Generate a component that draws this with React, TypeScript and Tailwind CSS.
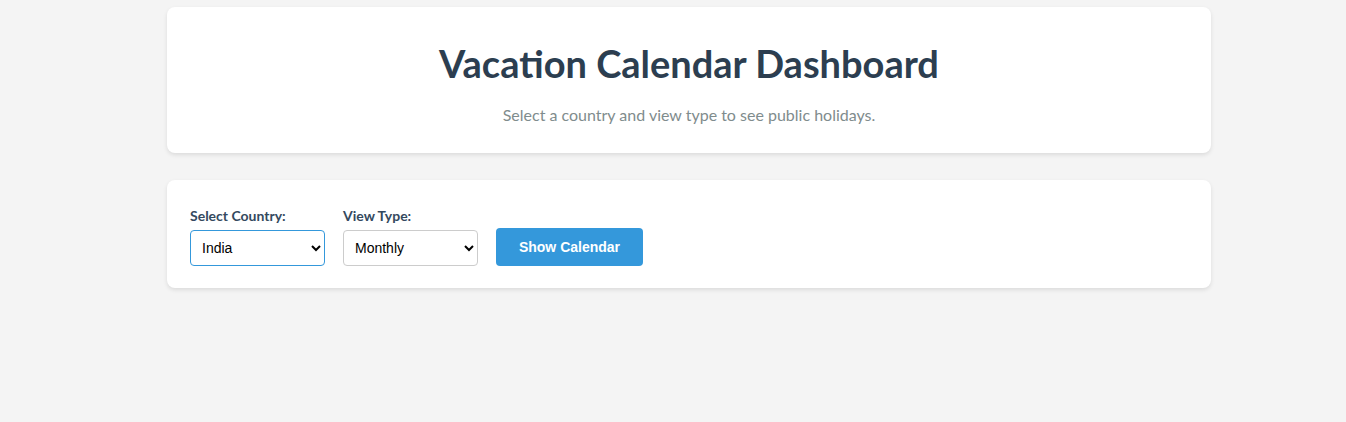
import React, { useState } from 'react';

const countries = ['India', 'United States', 'United Kingdom', 'Canada', 'Australia'];
const viewTypes = ['Monthly', 'Quarterly'];

const App: React.FC = () => {
  const [country, setCountry] = useState('India');
  const [view, setView] = useState('Monthly');

  return (
    <div className="min-h-[422px] bg-[#f4f4f4] pt-[7px] pl-[32px] flex justify-center font-['Lato',sans-serif]">
      <div className="w-[1044px] space-y-[27px]">
        <header className="bg-white rounded-lg shadow-[0_2px_4px_rgba(0,0,0,0.1)] h-[146px] flex flex-col items-center pt-[34px]">
          <h1 className="text-[38px] leading-[44px] font-bold text-[#2c3e50]">Vacation Calendar Dashboard</h1>
          <p className="mt-[18px] text-[16px] text-[#7f8c8d]">Select a country and view type to see public holidays.</p>
        </header>

        <section className="bg-white rounded-lg shadow-[0_2px_4px_rgba(0,0,0,0.1)] h-[108px] px-[23px] pb-[22px] flex items-end gap-[18px]">
          <div className="flex flex-col">
            <label className="text-[14px] font-bold text-[#34495e] mb-[4px]">Select Country:</label>
            <select
              value={country}
              onChange={(e) => setCountry(e.target.value)}
              className="w-[135px] h-[36px] px-[7px] border border-[#3498db] rounded-[4px] bg-white text-[14px] text-black font-['Liberation_Sans',sans-serif] outline-none"
            >
              {countries.map((c) => (
                <option key={c}>{c}</option>
              ))}
            </select>
          </div>
          <div className="flex flex-col">
            <label className="text-[14px] font-bold text-[#34495e] mb-[4px]">View Type:</label>
            <select
              value={view}
              onChange={(e) => setView(e.target.value)}
              className="w-[135px] h-[36px] px-[7px] border border-[#cccccc] rounded-[4px] bg-white text-[14px] text-black font-['Liberation_Sans',sans-serif] outline-none"
            >
              {viewTypes.map((v) => (
                <option key={v}>{v}</option>
              ))}
            </select>
          </div>
          <button className="w-[147px] h-[38px] rounded-[4px] bg-[#3498db] text-white text-[14px] font-bold font-['Liberation_Sans',sans-serif]">
            Show Calendar
          </button>
        </section>
      </div>
    </div>
  );
};

export default App;
